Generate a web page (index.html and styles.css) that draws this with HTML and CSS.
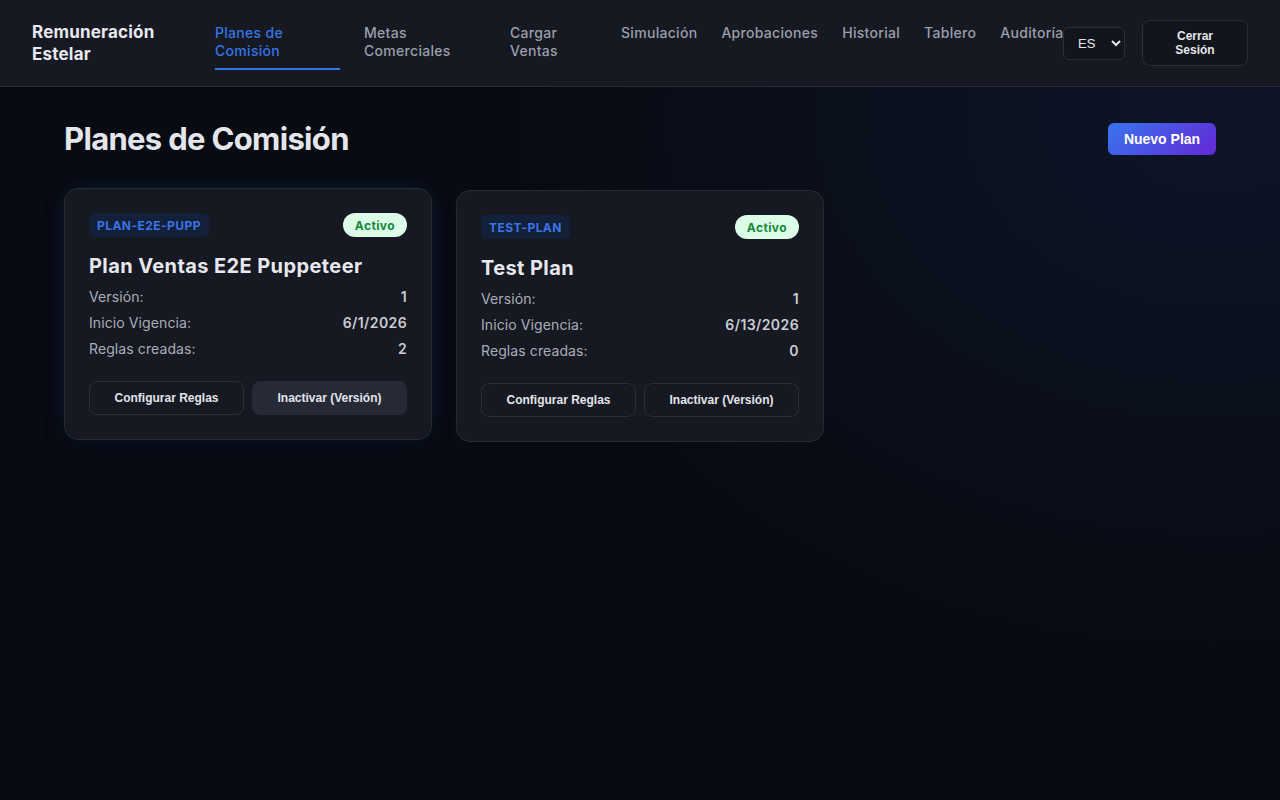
FILE: index.html
```html
<!DOCTYPE html>
<html lang="es">
<head>
<meta charset="utf-8">
<title>Remuneración Estelar - Planes de Comisión</title>
<link rel="stylesheet" href="styles.css">
</head>
<body>
<header class="topbar">
  <div class="brand">Remuneración Estelar</div>
  <nav class="nav">
    <a class="nav-link active">Planes de Comisión</a>
    <a class="nav-link">Metas Comerciales</a>
    <a class="nav-link">Cargar Ventas</a>
    <a class="nav-link">Simulación</a>
    <a class="nav-link">Aprobaciones</a>
    <a class="nav-link">Historial</a>
    <a class="nav-link">Tablero</a>
    <a class="nav-link">Auditoría</a>
  </nav>
  <div class="actions">
    <select class="lang"><option>ES</option><option>EN</option></select>
    <button class="btn-logout">Cerrar Sesión</button>
  </div>
</header>
<main class="main">
  <div class="page-head">
    <h1 class="page-title">Planes de Comisión</h1>
    <button class="btn-primary">Nuevo Plan</button>
  </div>
  <div class="grid">
    <article class="card is-hover">
      <div class="card-top">
        <span class="code">PLAN-E2E-PUPP</span>
        <span class="status">Activo</span>
      </div>
      <h2 class="card-title">Plan Ventas E2E Puppeteer</h2>
      <dl class="meta">
        <div class="meta-row"><dt>Versión:</dt><dd>1</dd></div>
        <div class="meta-row"><dt>Inicio Vigencia:</dt><dd>6/1/2026</dd></div>
        <div class="meta-row"><dt>Reglas creadas:</dt><dd>2</dd></div>
      </dl>
      <div class="card-actions">
        <button class="btn-ghost">Configurar Reglas</button>
        <button class="btn-ghost is-hover">Inactivar (Versión)</button>
      </div>
    </article>
    <article class="card">
      <div class="card-top">
        <span class="code">TEST-PLAN</span>
        <span class="status">Activo</span>
      </div>
      <h2 class="card-title">Test Plan</h2>
      <dl class="meta">
        <div class="meta-row"><dt>Versión:</dt><dd>1</dd></div>
        <div class="meta-row"><dt>Inicio Vigencia:</dt><dd>6/13/2026</dd></div>
        <div class="meta-row"><dt>Reglas creadas:</dt><dd>0</dd></div>
      </dl>
      <div class="card-actions">
        <button class="btn-ghost">Configurar Reglas</button>
        <button class="btn-ghost">Inactivar (Versión)</button>
      </div>
    </article>
  </div>
</main>
</body>
</html>
```

FILE: styles.css
```css
* { box-sizing: border-box; }
html { color-scheme: dark; }
body {
  margin: 0;
  min-height: 800px;
  font-family: Inter, "Noto Sans", sans-serif;
  color: #e5e7eb;
  background-color: #080b12;
  background-image: radial-gradient(ellipse 1000px 750px at 95% 15%, rgba(30, 50, 110, 0.24), rgba(8, 11, 18, 0) 70%);
}

.topbar {
  height: 87px;
  display: flex;
  align-items: center;
  padding: 0 32px;
  background: #161922;
  border-bottom: 1px solid #272b36;
}
.brand {
  flex: 0 0 159px;
  font-size: 17px;
  font-weight: 700;
  line-height: 22px;
  color: #e8e9ee;
  letter-spacing: 0.2px;
}
.nav {
  flex: 1 1 auto;
  min-width: 0;
  align-self: stretch;
  display: flex;
  align-items: flex-start;
  gap: 24px;
  margin-left: 24px;
}
.nav-link {
  display: block;
  padding: 24px 0 8px;
  border-bottom: 2px solid transparent;
  font-size: 14px;
  font-weight: 500;
  line-height: 18px;
  letter-spacing: 0.3px;
  color: #9a9fab;
  white-space: nowrap;
  cursor: pointer;
}
.nav-link:nth-child(-n+3) { white-space: normal; }
.nav-link:nth-child(1) { flex: 0 0 125px; }
.nav-link:nth-child(2) { flex: 0 0 122px; }
.nav-link:nth-child(3) { flex: 0 0 87px; }
.nav-link.active {
  color: #3575e6;
  border-bottom-color: #3575e6;
}
.actions {
  flex: 0 0 auto;
  display: flex;
  align-items: center;
  gap: 17px;
}
.lang {
  width: 62px;
  height: 33px;
  padding: 0 6px 0 10px;
  background: #12151c;
  color: #e5e7eb;
  border: 1px solid #2a2e39;
  border-radius: 6px;
  font-family: "Liberation Sans", Arial, sans-serif;
  font-size: 13px;
}
.btn-logout {
  width: 106px;
  height: 46px;
  padding: 0 20px;
  background: #12151c;
  color: #e5e7eb;
  border: 1px solid #2a2e39;
  border-radius: 8px;
  font-family: "Liberation Sans", Arial, sans-serif;
  font-size: 12px;
  font-weight: 700;
  line-height: 14px;
}

.main {
  padding: 32px 64px;
}
.page-head {
  display: flex;
  justify-content: space-between;
  align-items: center;
  margin-bottom: 31px;
}
.page-title {
  margin: 0;
  font-size: 31px;
  font-weight: 700;
  line-height: 40px;
  color: #e4e6ec;
  letter-spacing: -0.68px;
}
.btn-primary {
  width: 108px;
  height: 32px;
  border: 0;
  border-radius: 6px;
  background: linear-gradient(135deg, #3874ee, #6329d6);
  color: #fff;
  font-family: "Liberation Sans", Arial, sans-serif;
  font-size: 14px;
  font-weight: 700;
}

.grid {
  display: grid;
  grid-template-columns: repeat(3, 1fr);
  gap: 24px;
  align-items: start;
}
.card {
  background: #161922;
  border: 1px solid #262a35;
  border-radius: 14px;
  padding: 24px;
}
.card.is-hover {
  transform: translateY(-2px);
  box-shadow: 0 0 22px rgba(40, 90, 200, 0.18), 0 6px 18px rgba(0, 0, 0, 0.35);
}
.card-top {
  display: flex;
  justify-content: space-between;
  align-items: center;
  height: 24px;
}
.code {
  height: 24px;
  display: inline-flex;
  align-items: center;
  padding: 0 8px;
  border-radius: 6px;
  background: #13203a;
  color: #3a74e6;
  font-size: 12px;
  font-weight: 700;
  letter-spacing: 0.45px;
}
.status {
  height: 24px;
  display: inline-flex;
  align-items: center;
  padding: 0 12px;
  border-radius: 999px;
  background: #dcfce7;
  color: #15893a;
  font-size: 12px;
  font-weight: 700;
  letter-spacing: 0.4px;
}
.card-title {
  margin: 15px 0 7px;
  font-size: 20px;
  font-weight: 700;
  line-height: 28px;
  letter-spacing: 0.4px;
  color: #e6e8ee;
}
.meta {
  margin: 0;
  display: flex;
  flex-direction: column;
  gap: 6px;
}
.meta-row {
  display: flex;
  justify-content: space-between;
  font-size: 14px;
  line-height: 20px;
}
.meta-row dt { color: #a9adb8; letter-spacing: 0.1px; }
.meta-row dd { margin: 0; font-weight: 600; color: #c9ccd4; letter-spacing: 0.4px; }
.card-actions {
  display: grid;
  grid-template-columns: 1fr 1fr;
  gap: 8px;
  margin-top: 22px;
}
.btn-ghost {
  height: 34px;
  background: transparent;
  color: #e2e4ea;
  border: 1px solid #2a2e39;
  border-radius: 8px;
  font-family: "Liberation Sans", Arial, sans-serif;
  font-size: 12px;
  font-weight: 700;
}
.btn-ghost.is-hover {
  background: #252a36;
  border-color: #252a36;
}
```
